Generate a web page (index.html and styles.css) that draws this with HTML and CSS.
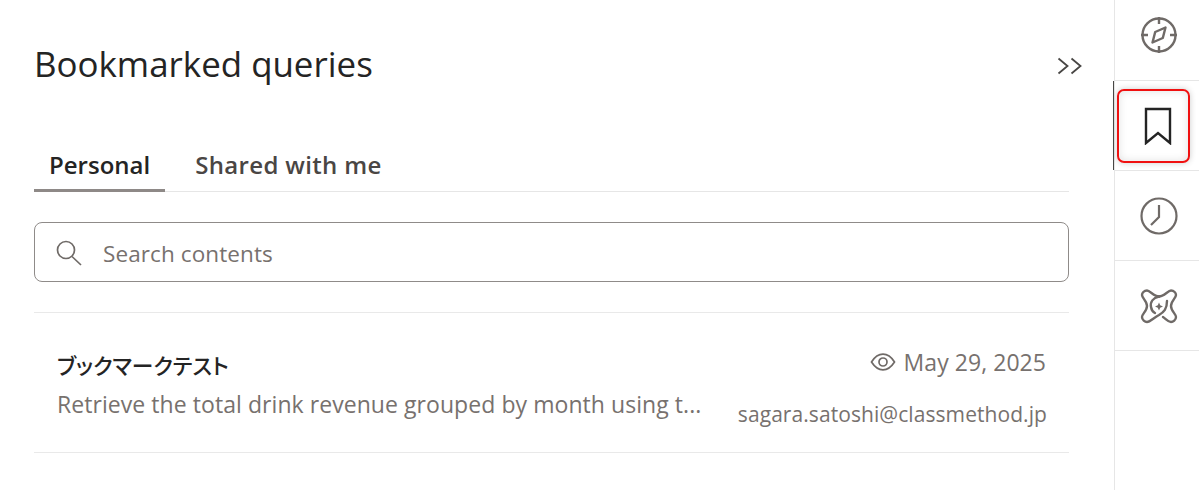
FILE: index.html
```html
<!DOCTYPE html>
<html lang="en">
<head>
  <meta charset="UTF-8">
  <meta name="viewport" content="width=device-width, initial-scale=1.0">
  <title>Bookmarked queries</title>
  <link rel="stylesheet" href="styles.css">
</head>
<body>
  <div class="page">
    <main class="panel">
      <div class="panel-head">
        <h1>Bookmarked queries</h1>
        <svg class="collapse" width="26" height="18" viewBox="0 0 26 18" fill="none" stroke="#484644" stroke-width="1.8">
          <path d="M1.5 1.5 10.500 9 1.500 16.500"/>
          <path d="M14.500 1.500 23.500 9 14.500 16.500"/>
        </svg>
      </div>

      <div class="tabs">
        <div class="tab active">Personal</div>
        <div class="tab">Shared with me</div>
      </div>

      <div class="search">
        <svg width="28" height="28" viewBox="0 0 28 28" fill="none" stroke="#6f6a67" stroke-width="1.7">
          <circle cx="11" cy="11" r="8.500"/>
          <path d="M17 17.500 26 26"/>
        </svg>
        <span>Search contents</span>
      </div>

      <div class="query">
        <div class="query-left">
          <div class="query-name">ブックマークテスト</div>
          <div class="query-text">Retrieve the total drink revenue grouped by month using t...</div>
        </div>
        <div class="query-right">
          <div class="query-date">
            <svg width="26" height="18" viewBox="0 0 26 18" fill="none" stroke="#6f6a67" stroke-width="1.7">
              <path d="M1.500 9C5 3.500 9 1.200 13 1.200S21 3.500 24.500 9C21 14.500 17 16.800 13 16.800S5 14.500 1.500 9Z"/>
              <circle cx="13" cy="9" r="4"/>
            </svg>
            <span>May 29, 2025</span>
          </div>
          <div class="query-owner">sagara.satoshi@classmethod.jp</div>
        </div>
      </div>
    </main>

    <nav class="rail">
      <div class="rail-item first">
        <svg width="38" height="38" viewBox="0 0 38 38" fill="none" stroke="#6f6a67" stroke-width="2.400" stroke-linejoin="round">
          <circle cx="19" cy="19" r="16.500"/>
          <path d="M19 1v7M19 30v7M1 19h7M30 19h7"/>
          <path d="M25.500 11.500 22.800 22 12.500 26.500 15.200 16Z"/>
        </svg>
      </div>
      <div class="rail-item current">
        <div class="rail-mark">
          <svg width="28" height="38" viewBox="0 0 28 38" fill="none" stroke="#242424" stroke-width="2.400">
            <path d="M2 2H26V36L14 26 2 36Z"/>
          </svg>
        </div>
      </div>
      <div class="rail-item">
        <svg width="38" height="38" viewBox="0 0 38 38" fill="none" stroke="#6f6a67" stroke-width="2.200">
          <circle cx="19" cy="19" r="17.500"/>
          <path d="M19 8V20L11 28"/>
        </svg>
      </div>
      <div class="rail-item">
        <svg width="38" height="36" viewBox="0 0 38 36" fill="none" stroke="#6f6a67" stroke-width="2.400" stroke-linecap="round" stroke-linejoin="round">
          <path d="M19 8.500C14 8.500 10 2.500 7 2.500 4 2.500 2 5 2 7 2 10 7 13 7 18 7 23 2 26 2 29 2 32 5 34 7 34 10 34 14 29.500 19 27 24 24 27 21 27 13"/>
          <path d="M19 8.500C24 8.500 28 2.500 31 2.500 34 2.500 36 5 36 7 36 10 31 13 31 18 31 23 36 26 36 29 36 32 33 34 31 34 28 34 26 31 23 29"/>
          <path d="M19 8.500C13 10 10 14 11 19 11.500 22 13 24 15 25"/>
          <path d="M19 14.500 20.200 17.300 23 18.500 20.200 19.700 19 22.500 17.800 19.700 15 18.500 17.800 17.300Z" fill="#6f6a67" stroke="none"/>
        </svg>
      </div>
    </nav>
  </div>
</body>
</html>
```

FILE: styles.css
```css
* { box-sizing: border-box; }
html, body { margin: 0; height: 100%; }
body { font-family: "Open Sans", "Noto Sans CJK JP", sans-serif; background: #fff; color: #242424; overflow: hidden; }
.page { display: flex; height: 490px; }

.panel { width: 1114px; padding: 0 45px 0 34px; }
.panel-head { display: flex; align-items: center; justify-content: space-between; height: 130px; margin-right: -14px; }
.panel-head h1 { margin: 0 0 3px 0; font-size: 34.900px; font-weight: 400; }
.collapse { margin-top: 2px; }

.tabs { display: flex; height: 62px; border-bottom: 1px solid #e6e6e6; }
.tab { padding: 18px 15px 0; font-size: 24px; font-weight: 600; color: #4a4644; letter-spacing: 0.350px; }
.tab + .tab { margin-left: 15px; }
.tab.active { color: #242424; letter-spacing: 0; border-bottom: 3px solid #8e8987; height: 62px; }

.search { display: flex; align-items: center; gap: 20px; height: 60px; margin-top: 30px; padding: 2px 0 0 20px; border: 1px solid #8f8b89; border-radius: 8px; font-size: 22.500px; letter-spacing: 0.100px; color: #77716e; }

.query { display: flex; justify-content: space-between; height: 141px; margin-top: 30px; padding: 0 22px 0 23px; border-top: 1px solid #e9e9e9; border-bottom: 1px solid #e9e9e9; }
.query-name { margin-top: 36px; font-size: 21.700px; font-weight: 500; font-feature-settings: "palt"; color: #242424; }
.query-text { margin-top: 8px; font-size: 23px; letter-spacing: 0.060px; color: #77716e; }
.query-right { display: flex; flex-direction: column; align-items: flex-end; }
.query-date { display: flex; align-items: center; gap: 8px; margin: 33px 1px 0 0; font-size: 23px; letter-spacing: 0.050px; color: #77716e; }
.query-owner { margin-top: 22px; font-size: 21px; letter-spacing: 0.070px; color: #77716e; }

.rail { flex: 1; border-left: 1px solid #e6e6e6; }
.rail-item { display: flex; align-items: center; justify-content: center; height: 90px; padding-left: 4px; border-bottom: 1px solid #e6e6e6; }
.rail-item.first { height: 81px; padding-bottom: 10px; }
.rail-item.current { position: relative; justify-content: flex-start; padding-left: 2px; padding-top: 1px; }
.rail-item.current::before { content: ""; position: absolute; left: -2px; top: 0; bottom: 0; width: 1px; background: #484644; }
.rail-mark { display: flex; align-items: center; justify-content: center; width: 73px; height: 74px; padding-left: 8px; border: 2px solid #f01010; border-radius: 7px; box-shadow: 0 0 6px rgba(0,0,0,0.200), inset 0 0 8px rgba(0,0,0,0.120); }
```
